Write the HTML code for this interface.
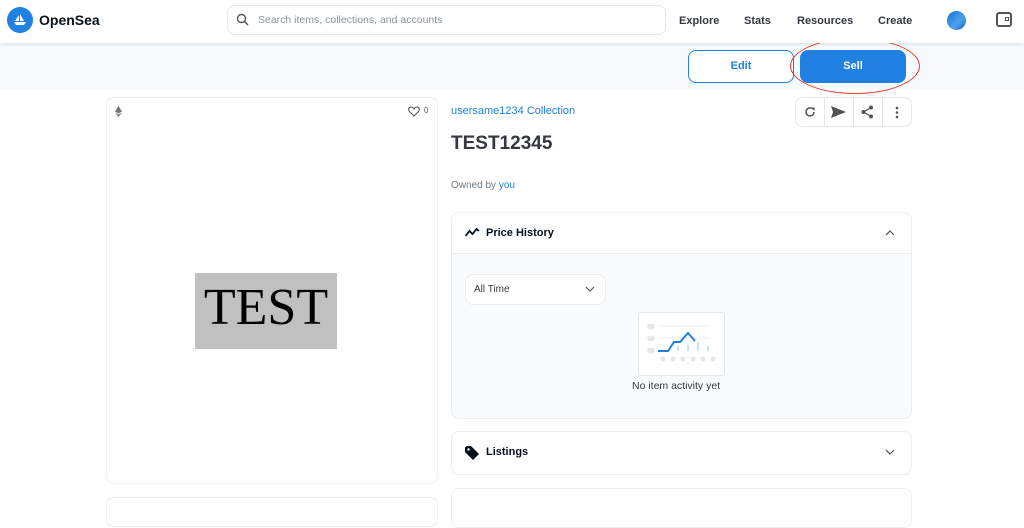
<!DOCTYPE html>
<html><head><meta charset="utf-8"><style>
*{box-sizing:border-box;margin:0;padding:0}
body{width:1024px;height:506px;overflow:hidden;background:#fff;font-family:"Liberation Sans",sans-serif;color:#04111d;position:relative}
.abs{position:absolute}
.hdr{left:0;top:0;width:1024px;height:43px;background:#fff;box-shadow:0 1px 4px rgba(0,0,0,.12);z-index:2}
.band{left:0;top:43px;width:1024px;height:46px;background:#f7fafd}
.nav{font-size:11px;font-weight:bold;color:#353840;top:15px}
.card{border:1px solid #eceef0;border-radius:8px;background:#fff}
</style></head><body>
<div class="abs hdr">
 <div class="abs" style="left:7px;top:7px;width:26px;height:26px;border-radius:50%;background:#2081e2"></div>
 <svg class="abs" style="left:11px;top:11px" width="18" height="18" viewBox="0 0 18 18"><path d="M4 10 L8 4 L8 10Z M9 3 L13 10 L9 10Z M3 11 H15 L13 14 H5Z" fill="#fff"/></svg>
 <div class="abs" style="left:39px;top:12px;font-size:14px;font-weight:bold">OpenSea</div>
 <div class="abs" style="left:227px;top:5px;width:439px;height:30px;border:1px solid #e5e8eb;border-radius:8px"></div>
 <svg class="abs" style="left:236px;top:13px" width="13" height="13" viewBox="0 0 13 13"><circle cx="5.5" cy="5.5" r="4" fill="none" stroke="#555" stroke-width="1.4"/><path d="M8.5 8.5L12 12" stroke="#555" stroke-width="1.4"/></svg>
 <div class="abs" style="left:258px;top:14px;font-size:10.5px;color:#8a939b">Search items, collections, and accounts</div>
 <div class="abs nav" style="left:679px">Explore</div>
 <div class="abs nav" style="left:744px">Stats</div>
 <div class="abs nav" style="left:797px">Resources</div>
 <div class="abs nav" style="left:878px">Create</div>
 <div class="abs" style="left:947px;top:11px;width:19px;height:19px;border-radius:50%;background:linear-gradient(135deg,#1a6fd0,#4aa3f0 60%,#1b5fb0)"></div>
 <div class="abs" style="left:996px;top:12px;width:16px;height:15px;border:2px solid #555;border-radius:3px"></div>
 <div class="abs" style="left:1005px;top:17px;width:4px;height:4px;border:1.5px solid #555"></div>
</div>
<div class="abs band"></div>
<div class="abs" style="left:688px;top:50px;width:106px;height:33px;border:1px solid #2081e2;border-radius:8px;background:#fff;color:#2081e2;font-size:11px;font-weight:bold;text-align:center;line-height:31px">Edit</div>
<div class="abs" style="left:800px;top:50px;width:106px;height:33px;border-radius:8px;background:#2081e2;color:#fff;font-size:11px;font-weight:bold;text-align:center;line-height:33px">Sell</div>
<div class="abs" style="left:790px;top:38px;width:130px;height:56px;border:1.5px solid #e53a2a;border-radius:50%"></div>

<div class="abs card" style="left:106px;top:97px;width:332px;height:387px"></div>
<svg class="abs" style="left:115px;top:106px" width="7" height="11" viewBox="0 0 7 11"><path d="M3.5 0L7 5.5 3.5 7.5 0 5.5Z M0 6.5L3.5 8.5 7 6.5 3.5 11Z" fill="#777"/></svg>
<svg class="abs" style="left:408px;top:106px" width="12" height="11" viewBox="0 0 12 11"><path d="M6 10L1.5 5.5C0 4 .5 1 3 1 4.5 1 5.5 2 6 3 6.5 2 7.5 1 9 1 11.5 1 12 4 10.5 5.5Z" fill="none" stroke="#555" stroke-width="1.1"/></svg>
<div class="abs" style="left:424px;top:106px;font-size:8px;color:#555">0</div>
<div class="abs" style="left:195px;top:273px;width:142px;height:76px;background:#c0c0c0;font-family:'Liberation Serif',serif;font-size:52px;color:#000;line-height:70px;text-align:center;letter-spacing:0">TEST</div>
<div class="abs card" style="left:106px;top:497px;width:332px;height:30px"></div>

<div class="abs" style="left:451px;top:105px;font-size:11px;color:#2081e2">usersame1234 Collection</div>
<div class="abs" style="left:795px;top:97px;width:117px;height:30px;border:1px solid #e5e8eb;border-radius:8px"></div>
<div class="abs" style="left:824px;top:97px;width:1px;height:30px;background:#e5e8eb"></div>
<div class="abs" style="left:853px;top:97px;width:1px;height:30px;background:#e5e8eb"></div>
<div class="abs" style="left:882px;top:97px;width:1px;height:30px;background:#e5e8eb"></div>
<svg class="abs" style="left:803px;top:105px" width="14" height="14" viewBox="0 0 14 14"><path d="M11 7A4 4 0 1 1 9.5 3.8" fill="none" stroke="#555" stroke-width="1.5"/><path d="M8 2.5H11.5V6Z" fill="#555"/></svg>
<svg class="abs" style="left:831px;top:106px" width="15" height="12" viewBox="0 0 15 12"><path d="M0 0L15 6 0 12 2 6Z" fill="#555"/></svg>
<svg class="abs" style="left:861px;top:105px" width="13" height="14" viewBox="0 0 13 14"><circle cx="10" cy="2.5" r="2" fill="#555"/><circle cx="2.5" cy="7" r="2" fill="#555"/><circle cx="10" cy="11.5" r="2" fill="#555"/><path d="M10 2.5L2.5 7 10 11.5" stroke="#555" stroke-width="1.3" fill="none"/></svg>
<svg class="abs" style="left:895px;top:106px" width="4" height="13" viewBox="0 0 4 13"><circle cx="2" cy="2" r="1.3" fill="#555"/><circle cx="2" cy="6.5" r="1.3" fill="#555"/><circle cx="2" cy="11" r="1.3" fill="#555"/></svg>
<div class="abs" style="left:451px;top:133px;font-size:19px;font-weight:bold;color:#353840">TEST12345</div>
<div class="abs" style="left:451px;top:180px;font-size:10px;color:#707a83">Owned by <span style="color:#2081e2">you</span></div>

<div class="abs card" style="left:451px;top:212px;width:461px;height:207px;background:#f9fbfd"></div>
<div class="abs" style="left:452px;top:213px;width:459px;height:41px;background:#fff;border-bottom:1px solid #eceef0;border-radius:8px 8px 0 0"></div>
<svg class="abs" style="left:465px;top:228px" width="15" height="9" viewBox="0 0 15 9"><path d="M0.5 8L4.5 3 7.5 6 11.5 1 14 3" fill="none" stroke="#04111d" stroke-width="1.8"/></svg>
<div class="abs" style="left:486px;top:227px;font-size:11px;font-weight:bold">Price History</div>
<svg class="abs" style="left:885px;top:229px" width="10" height="7" viewBox="0 0 10 7"><path d="M1 6L5 2 9 6" fill="none" stroke="#555" stroke-width="1.2"/></svg>
<div class="abs" style="left:465px;top:274px;width:141px;height:31px;border:1px solid #eceef0;border-radius:8px;background:#fff"></div>
<div class="abs" style="left:474px;top:284px;font-size:10px;color:#353840">All Time</div>
<svg class="abs" style="left:585px;top:286px" width="10" height="7" viewBox="0 0 10 7"><path d="M1 1L5 5 9 1" fill="none" stroke="#555" stroke-width="1.2"/></svg>
<div class="abs" style="left:638px;top:312px;width:87px;height:64px;border:1px solid #e5e8eb;border-radius:3px;background:#fff"></div>
<svg class="abs" style="left:645px;top:320px" width="75" height="50" viewBox="0 0 75 50"><rect x="2" y="4" width="8" height="5" rx="2.5" fill="#e5e8eb"/><rect x="2" y="16" width="8" height="5" rx="2.5" fill="#e5e8eb"/><rect x="2" y="28" width="8" height="5" rx="2.5" fill="#e5e8eb"/><path d="M13 6H65M13 18H65" stroke="#eceef0"/><g stroke="#b7d6f6" stroke-width="1.5"><path d="M33 26V31M43 25V31M53 22V31M63 26V31"/></g><path d="M13 31H23L29 22H35L43 13 50 21" fill="none" stroke="#2081e2" stroke-width="2"/><g fill="#e5e8eb"><circle cx="18" cy="39" r="2.5"/><circle cx="28" cy="39" r="2.5"/><circle cx="38" cy="39" r="2.5"/><circle cx="48" cy="39" r="2.5"/><circle cx="58" cy="39" r="2.5"/><circle cx="68" cy="39" r="2.5"/></g></svg>
<div class="abs" style="left:632px;top:380px;font-size:10.5px;color:#353840">No item activity yet</div>

<div class="abs card" style="left:451px;top:431px;width:461px;height:44px"></div>
<svg class="abs" style="left:465px;top:446px" width="15" height="14" viewBox="0 0 15 14"><path d="M0 1.5V6L8 14 14 8 6 0H1.5Z" fill="#04111d"/><circle cx="3.5" cy="3.5" r="1.2" fill="#fff"/></svg>
<div class="abs" style="left:486px;top:446px;font-size:11px;font-weight:bold">Listings</div>
<svg class="abs" style="left:885px;top:449px" width="10" height="7" viewBox="0 0 10 7"><path d="M1 1L5 5 9 1" fill="none" stroke="#555" stroke-width="1.2"/></svg>
<div class="abs card" style="left:451px;top:488px;width:461px;height:40px"></div>
</body></html>
